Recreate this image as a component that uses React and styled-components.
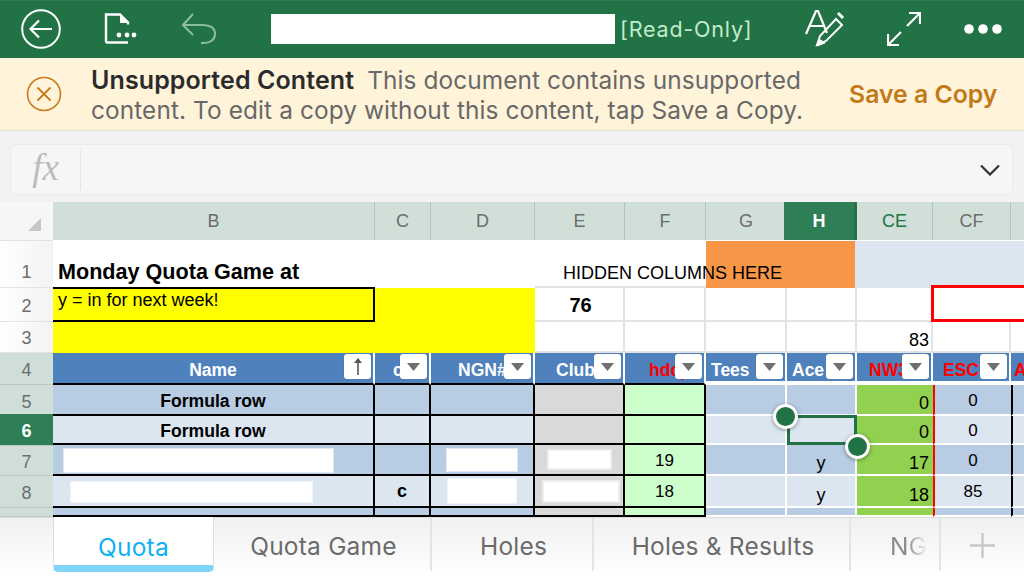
import React from "react";
import styled, { createGlobalStyle } from "styled-components";

const GlobalStyle = createGlobalStyle`
  html, body {
    margin: 0;
    padding: 0;
    background: #fff;
  }
  body {
    width: 1024px;
    height: 576px;
    overflow: hidden;
    font-family: "Inter", "Liberation Sans", sans-serif;
  }
`;

const Page = styled.div`
  width: 1024px;
  height: 576px;
  display: flex;
  flex-direction: column;
  overflow: hidden;
`;

const TopBar = styled.div`
  height: 58px;
  flex: none;
  box-sizing: border-box;
  display: flex;
  align-items: center;
  padding: 0 20px 2px 20px;
  background: #217346;
  border-top: 1px solid #2f7d52;
`;

const BarIcon = styled.div`
  width: 42px;
  height: 42px;
  flex: none;
  margin-right: ${(p) => p.$gap || 0}px;
  display: flex;
  align-items: center;
  justify-content: center;
`;

const TitleBox = styled.div`
  width: 344px;
  height: 30px;
  flex: none;
  margin-left: 50px;
  background: #fff;
`;

const ReadOnly = styled.span`
  margin-left: 5px;
  font-size: 21.5px;
  letter-spacing: 0.8px;
  color: #c3ebcd;
  white-space: nowrap;
`;

const BarRight = styled.div`
  margin-left: auto;
  display: flex;
  align-items: center;
`;

const Banner = styled.div`
  height: 73px;
  flex: none;
  box-sizing: border-box;
  display: flex;
  align-items: center;
  background: #fff3da;
  border-bottom: 1px solid #e9e3d4;
`;

const BannerIcon = styled.div`
  width: 91px;
  flex: none;
  display: flex;
  justify-content: center;
  padding-right: 3px;
  box-sizing: border-box;
`;

const BannerText = styled.div`
  width: 730px;
  flex: none;
  padding-top: 2px;
  font-size: 24.4px;
  line-height: 30px;
  color: #686868;
  letter-spacing: 0.1px;
`;

const BannerTitle = styled.b`
  font-size: 25px;
  font-weight: 600;
  color: #2b2b2b;
  margin-right: 13px;
`;

const SaveCopy = styled.div`
  margin-left: 28px;
  font-size: 24.8px;
  font-weight: 600;
  color: #c27a17;
  white-space: nowrap;
`;

const FormulaArea = styled.div`
  height: 71px;
  flex: none;
  box-sizing: border-box;
  padding: 13px 11px 7px 10px;
  background: #f2f2f2;
`;

const FormulaBox = styled.div`
  height: 100%;
  box-sizing: border-box;
  display: flex;
  align-items: center;
  background: #f6f6f6;
  border: 1px solid #ebebeb;
  border-radius: 6px;
`;

const FxLabel = styled.div`
  width: 70px;
  height: 40px;
  box-sizing: border-box;
  border-right: 1px solid #e6e6e6;
  display: flex;
  align-items: center;
  justify-content: center;
  padding-bottom: 4px;
  font-family: "Liberation Serif", serif;
  font-style: italic;
  font-size: 37px;
  color: #bcbcbc;
`;

const FormulaChevron = styled.div`
  margin-left: auto;
  margin-right: 12px;
  display: flex;
`;

const Sheet = styled.div`
  height: 315px;
  flex: none;
  display: grid;
  grid-template-columns: 53px 322px 56px 104px 90px 81px 81px 70px 76px 78px 78px;
  grid-template-rows: 39px 47px 34px 31px 32px 31px 29px 31px 32px 9px;
  overflow: hidden;
  background: #fff;
  font-family: "Liberation Sans", Arial, sans-serif;
  color: #000;
`;

const Corner = styled.div`
  background: #f6f6f6;
  border-bottom: 1px solid #e2e2e2;
  box-sizing: border-box;
  display: flex;
  align-items: flex-end;
  justify-content: flex-end;
  padding: 0 12px 9px 0;
`;

const ColHead = styled.div`
  box-sizing: border-box;
  height: 38px;
  display: flex;
  align-items: center;
  justify-content: center;
  font-size: 18px;
  background: ${(p) => (p.$active ? "#2e7f55" : "#d0dfd8")};
  color: ${(p) => (p.$active ? "#fff" : p.$hit ? "#217346" : "#6d6d6d")};
  font-weight: ${(p) => (p.$active ? 700 : 400)};
  border-right: ${(p) => (p.$active ? "4px solid #26714a" : "1px solid #b4c5bd")};
  margin: ${(p) => (p.$active ? "0 -1px 0 -3px" : "0")};
`;

const RowHead = styled.div`
  box-sizing: border-box;
  display: flex;
  align-items: ${(p) => (p.$tall ? "flex-end" : "center")};
  justify-content: center;
  padding: ${(p) => (p.$tall ? "0 0 4px" : p.$hit ? "4px 0 0" : "3px 0 0")};
  margin: ${(p) => (p.$active ? "-2px 0 -1px" : "0")};
  z-index: ${(p) => (p.$active ? 1 : "auto")};
  font-size: 18px;
  background: ${(p) =>
    p.$active ? "#2e7f55" : p.$hit ? "#cfdfd8" : "linear-gradient(90deg, #ffffff, #f3f3f3)"};
  color: ${(p) => (p.$active ? "#fff" : "#6d6d6d")};
  font-weight: ${(p) => (p.$active ? 700 : 400)};
  border-bottom: 1px solid ${(p) => (p.$hit ? "#b9c9c2" : "#e4e4e4")};
`;

const LINES = {
  grid: "2px solid #e3e3e3",
  black: "2px solid #000",
  white: "2px solid #fff",
  band: "2px solid #dce6f1",
  none: "0 solid transparent",
};

const Cell = styled.div`
  position: relative;
  box-sizing: border-box;
  min-width: 0;
  grid-column: span ${(p) => p.$span || 1};
  display: flex;
  align-items: ${(p) => p.$valign || "flex-end"};
  justify-content: ${(p) => p.$align || "center"};
  padding: ${(p) => p.$pad || "0"};
  white-space: nowrap;
  font-size: ${(p) => p.$size || 18}px;
  font-weight: ${(p) => (p.$bold ? 700 : 400)};
  background: ${(p) => p.$bg || "#fff"};
  border-right: ${(p) => LINES[p.$right || p.$line || "grid"]};
  border-bottom: ${(p) => LINES[p.$bottom || p.$line || "grid"]};
  border-left: ${(p) => (p.$redLeft ? "2px solid #f00" : p.$blackLeft ? "2px solid #000" : "0")};
  z-index: ${(p) => (p.$over ? 2 : "auto")};
`;

const NoteBox = styled(Cell)`
  border: 2px solid #000;
  border-left: 0;
  margin-top: -1px;
`;

const RedBox = styled(Cell)`
  border: 3px solid #f00;
  border-right: 0;
  margin: -3px 0 0 -2px;
  z-index: 1;
`;

const HeaderCell = styled.div`
  position: relative;
  box-sizing: border-box;
  min-width: 0;
  overflow: hidden;
  display: flex;
  align-items: center;
  justify-content: ${(p) => p.$align || "flex-start"};
  padding: 5px 0 0 ${(p) => p.$pad || 0}px;
  white-space: nowrap;
  font-size: 17.5px;
  font-weight: 700;
  color: ${(p) => (p.$red ? "#f00" : "#fff")};
  background: linear-gradient(#4f81bd, #4f81bd) top / 100% ${(p) => (p.$black ? "31px" : "28px")} no-repeat;
  background-color: #fff;
  border-right: 2px solid #fff;
  border-bottom: ${(p) => (p.$black ? "2px solid #000" : "2px solid #fff")};
`;

const FilterButton = styled.div`
  position: absolute;
  top: 1px;
  right: 2px;
  width: 27px;
  height: 25px;
  border-radius: 3px;
  background: #fff;
  box-shadow: 0 0 1px rgba(0, 0, 0, 0.3);
  display: flex;
  align-items: flex-start;
  justify-content: center;
  padding-top: ${(p) => (p.$sorted ? 3 : 9)}px;
  box-sizing: border-box;
`;

const Blank = styled.div`
  width: ${(p) => p.$w}px;
  height: ${(p) => p.$h}px;
  flex: none;
  margin: ${(p) => p.$m || "0"};
  background: #fff;
  box-shadow: 0 0 0 ${(p) => p.$halo || 1}px rgba(255, 255, 255, 0.55);
`;

const Selected = styled(Cell)`
  border: 3px solid #217346;
  margin-top: -1px;
  z-index: 3;
`;

const Handle = styled.div`
  position: absolute;
  width: 19px;
  height: 19px;
  border-radius: 50%;
  background: #217346;
  border: 3px solid #fff;
  box-shadow: 0 1px 4px rgba(0, 0, 0, 0.4);
  z-index: 4;
  ${(p) => (p.$start ? "left: -17px; top: -14px;" : "right: -16px; bottom: -17px;")}
`;

const TabBar = styled.div`
  height: 59px;
  flex: none;
  display: flex;
  padding-left: 53px;
  box-sizing: border-box;
  background: linear-gradient(#f0f0f0, #ffffff);
  box-shadow: inset 0 1px 0 #dcdcdc;
`;

const Tab = styled.div`
  width: ${(p) => p.$w}px;
  flex: none;
  box-sizing: border-box;
  display: flex;
  align-items: center;
  justify-content: ${(p) => (p.$faded ? "flex-start" : "center")};
  font-size: 24.5px;
  letter-spacing: 0.2px;
  color: ${(p) => (p.$active ? "#0fb0f2" : "#6b6b6b")};
  background: ${(p) => (p.$active ? "#fff" : "transparent")};
  ${(p) =>
    p.$active
      ? `border-left: 1px solid #dedede; border-right: 1px solid #dedede; margin-bottom: 4px; padding-top: 12px; border-bottom: 7px solid #7fd5f8; border-radius: 0 0 5px 5px;`
      : `margin: 1px 0 5px; padding: 3px 0 0 ${p.$faded ? 39 : 3}px; border-right: 2px solid #e4e4e4;`}
`;

const FadingLabel = styled.span`
  background: linear-gradient(90deg, #8a8a8a 45%, #ececec 95%);
  -webkit-background-clip: text;
  background-clip: text;
  color: transparent;
`;

const AddTab = styled.div`
  flex: 1;
  display: flex;
  align-items: center;
  justify-content: center;
  padding-bottom: 2px;
`;

const Triangle = () => (
  <svg width="13" height="8" viewBox="0 0 13 8">
    <path d="M0 0h13L6.5 8z" fill="#6f6f6f" />
  </svg>
);

const Filter = ({ sorted }) => (
  <FilterButton $sorted={sorted}>
    {sorted ? (
      <svg width="12" height="18" viewBox="0 0 12 18" fill="none">
        <path d="M6 18V2" stroke="#555" strokeWidth="1.6" />
        <path d="M2 6l4-5 4 5z" fill="#555" />
      </svg>
    ) : (
      <Triangle />
    )}
  </FilterButton>
);

const DARK = "#b8cce4";
const LIGHT = "#dce6f1";
const GRAY = "#d9d9d9";
const MINT = "#ccffcc";
const LIME = "#92d050";

const rows = [
  { n: 5, band: DARK, name: "Formula row", ce: "0", cf: "0" },
  { n: 6, band: LIGHT, name: "Formula row", ce: "0", cf: "0", active: true },
  { n: 7, band: DARK, hdc: "19", ace: "y", ce: "17", cf: "0",
    nameBox: { $w: 269, $h: 23, $m: "0 0 0 11px" }, dBox: { $w: 70, $h: 22 }, eBox: { $w: 61, $h: 17 } },
  { n: 8, band: LIGHT, c: "c", hdc: "18", ace: "y", ce: "18", cf: "85",
    nameBox: { $w: 241, $h: 20, $m: "0 0 0 18px" }, dBox: { $w: 68, $h: 24 }, eBox: { $w: 74, $h: 19, $m: "0 0 0 4px" } },
  { n: 9, band: DARK, hidden: true },
];

const VMID = "center";

function DataRow({ row }) {
  const { n, band, name, c, hdc, ace, ce, cf, nameBox, dBox, eBox, active, hidden } = row;
  return (
    <>
      <RowHead $hit $active={active}>{!hidden && n}</RowHead>
      <Cell $bg={band} $line="black" $bold $valign={VMID} $size={17.6}
        $align={nameBox ? "flex-start" : "center"} $pad={name ? "3px 0 0 0" : "1px 0 0 0"}>
        {name}
        {nameBox && <Blank {...nameBox} />}
      </Cell>
      <Cell $bg={band} $line="black" $bold $valign={VMID}>{c}</Cell>
      <Cell $bg={band} $line="black" $valign={VMID}>{dBox && <Blank {...dBox} />}</Cell>
      <Cell $bg={GRAY} $line="black" $valign={VMID}>{eBox && <Blank {...eBox} $halo={2} />}</Cell>
      <Cell $bg={MINT} $line="black" $valign={VMID} $size={17} $pad="2px 0 0 0">{hdc}</Cell>
      <Cell $bg={band} $line="white" />
      {active ? (
        <Selected $bg={band}>
          <Handle $start />
          <Handle />
        </Selected>
      ) : (
        <Cell $bg={band} $line="white">{ace}</Cell>
      )}
      <Cell $bg={LIME} $line="white" $right="none" $align="flex-end" $pad="0 4px 0 0">{ce}</Cell>
      <Cell $bg={band} $line="white" $right="none" $redLeft $valign={VMID} $size={17} $pad="2px 0 0 0">{cf}</Cell>
      <Cell $bg={band} $line="white" $right="none" $blackLeft />
    </>
  );
}

export default function App() {
  return (
    <>
      <GlobalStyle />
      <Page>
        <TopBar>
          <BarIcon $gap={37}>
            <svg width="40" height="40" viewBox="0 0 40 40" fill="none" stroke="#fff">
              <circle cx="20" cy="20" r="18.8" strokeWidth="2" />
              <path d="M31 20H10M18 11.5L9.5 20l8.5 8.5" strokeWidth="2.2" />
            </svg>
          </BarIcon>
          <BarIcon $gap={38}>
            <svg width="34" height="32" viewBox="0 0 34 32" fill="none">
              <path d="M3 29.5V1.5h14l8 8v2" stroke="#fff" strokeWidth="2.4" />
              <path d="M3 29.5h22" stroke="#fff" strokeWidth="2.4" />
              <path d="M17 1l9 9h-9z" fill="#fff" />
              <circle cx="16" cy="22" r="2.4" fill="#fff" />
              <circle cx="24" cy="22" r="2.4" fill="#fff" />
              <circle cx="31" cy="22" r="2.4" fill="#fff" />
            </svg>
          </BarIcon>
          <BarIcon>
            <svg width="36" height="32" viewBox="0 0 36 32" fill="none" stroke="#8dbd9f" strokeWidth="2">
              <path d="M11 1L1 12l10 10" />
              <path d="M1 12h19c8 0 13 3 13 9s-5 9-11 9h-3" />
            </svg>
          </BarIcon>
          <TitleBox />
          <ReadOnly>[Read-Only]</ReadOnly>
          <BarRight>
            <BarIcon $gap={37}>
              <svg width="40" height="38" viewBox="0 0 40 38" fill="none" stroke="#fff">
                <path d="M1 24L11 1h2l9 22M5 16h13" strokeWidth="2.2" />
                <path d="M12 35l3-9 16-17 6 6-16 16z" strokeWidth="2" />
                <path d="M33 3l5 5" strokeWidth="3" />
                <path d="M12 36l2-7 6 4z" fill="#fff" />
              </svg>
            </BarIcon>
            <BarIcon $gap={37}>
              <svg width="34" height="34" viewBox="0 0 34 34" fill="none" stroke="#fff" strokeWidth="2.2">
                <path d="M20 14L33 1M22 1h11v11" />
                <path d="M14 20L1 33M1 22v11h11" />
              </svg>
            </BarIcon>
            <BarIcon>
              <svg width="38" height="10" viewBox="0 0 38 10" fill="#fff">
                <circle cx="5" cy="5" r="4.8" />
                <circle cx="19" cy="5" r="4.8" />
                <circle cx="33" cy="5" r="4.8" />
              </svg>
            </BarIcon>
          </BarRight>
        </TopBar>

        <Banner>
          <BannerIcon>
            <svg width="36" height="36" viewBox="0 0 36 36" fill="none" stroke="#c67c1c">
              <circle cx="18" cy="18" r="16.5" strokeWidth="1.6" />
              <path d="M11.5 11.5l13 13M24.5 11.5l-13 13" strokeWidth="1.8" />
            </svg>
          </BannerIcon>
          <BannerText>
            <BannerTitle>Unsupported Content</BannerTitle>
            This document contains unsupported content. To edit a copy without this content, tap Save a Copy.
          </BannerText>
          <SaveCopy>Save a Copy</SaveCopy>
        </Banner>

        <FormulaArea>
          <FormulaBox>
            <FxLabel>fx</FxLabel>
            <FormulaChevron>
              <svg width="20" height="12" viewBox="0 0 20 12" fill="none" stroke="#333" strokeWidth="2.2">
                <path d="M1 1.5l9 9 9-9" />
              </svg>
            </FormulaChevron>
          </FormulaBox>
        </FormulaArea>

        <Sheet>
          <Corner>
            <svg width="13" height="13" viewBox="0 0 13 13">
              <path d="M13 0v13H0z" fill="#c6c6c6" />
            </svg>
          </Corner>
          <ColHead>B</ColHead>
          <ColHead>C</ColHead>
          <ColHead>D</ColHead>
          <ColHead>E</ColHead>
          <ColHead>F</ColHead>
          <ColHead>G</ColHead>
          <ColHead $active>H</ColHead>
          <ColHead $hit>CE</ColHead>
          <ColHead>CF</ColHead>
          <ColHead />

          <RowHead $tall>1</RowHead>
          <Cell $span={3} $align="flex-start" $pad="0 0 3px 5px" $size={21.6} $bold $line="none">
            Monday Quota Game at
          </Cell>
          <Cell $span={2} $align="flex-start" $pad="0 0 2px 28px" $over $right="none">HIDDEN COLUMNS HERE</Cell>
          <Cell $span={2} $bg="#f79646" $line="none" $right="band" />
          <Cell $span={3} $bg={LIGHT} $line="none" />

          <RowHead>2</RowHead>
          <NoteBox $bg="#ff0" $align="flex-start" $valign="flex-start" $pad="1px 0 0 5px">
            y = in for next week!
          </NoteBox>
          <Cell $span={2} $bg="#ff0" $line="none" />
          <Cell $bold $size={20} $pad="0 0 3px 3px">76</Cell>
          <Cell />
          <Cell />
          <Cell />
          <Cell />
          <RedBox $span={2} />

          <RowHead>3</RowHead>
          <Cell $span={3} $bg="#ff0" $line="none" />
          <Cell />
          <Cell />
          <Cell />
          <Cell />
          <Cell $align="flex-end" $pad="0 2px 0 0">83</Cell>
          <Cell />
          <Cell />

          <RowHead $hit>4</RowHead>
          <HeaderCell $black $align="center">Name<Filter sorted /></HeaderCell>
          <HeaderCell $black $pad={18}>c<Filter /></HeaderCell>
          <HeaderCell $black $pad={27}>NGN#<Filter /></HeaderCell>
          <HeaderCell $black $pad={21}>Club#<Filter /></HeaderCell>
          <HeaderCell $black $red $pad={24}>hdcp<Filter /></HeaderCell>
          <HeaderCell $pad={5}>Tees<Filter /></HeaderCell>
          <HeaderCell $pad={5}>Ace<Filter /></HeaderCell>
          <HeaderCell $red $pad={12}>NW36<Filter /></HeaderCell>
          <HeaderCell $red $pad={10}>ESC<Filter /></HeaderCell>
          <HeaderCell $red $pad={3}>A</HeaderCell>

          {rows.map((row) => (
            <DataRow key={row.n} row={row} />
          ))}
        </Sheet>

        <TabBar>
          <Tab $active $w={161}>Quota</Tab>
          <Tab $w={218}>Quota Game</Tab>
          <Tab $w={162}>Holes</Tab>
          <Tab $w={257}>Holes &amp; Results</Tab>
          <Tab $faded $w={90}><FadingLabel>NG</FadingLabel></Tab>
          <AddTab>
            <svg width="25" height="25" viewBox="0 0 25 25" stroke="#c8c8c8" strokeWidth="2.4">
              <path d="M12.5 0v25M0 12.5h25" />
            </svg>
          </AddTab>
        </TabBar>
      </Page>
    </>
  );
}
